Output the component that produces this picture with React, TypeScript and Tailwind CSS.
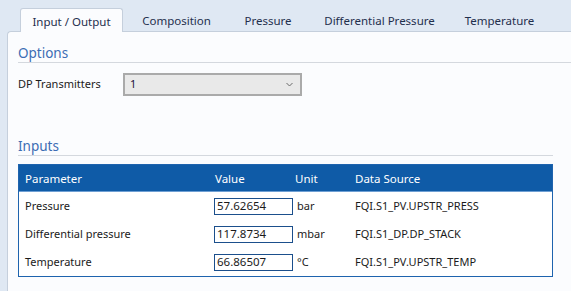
import { useState } from "react";

const tabs = [
  { label: "Input / Output", w: "w-[103px]" },
  { label: "Composition", w: "w-[107px]" },
  { label: "Pressure", w: "w-[76px]" },
  { label: "Differential Pressure", w: "w-[147px]" },
  { label: "Temperature", w: "w-[93px]" },
];

const rows = [
  { name: "Pressure", value: "57.62654", unit: "bar", source: "FQI.S1_PV.UPSTR_PRESS" },
  { name: "Differential pressure", value: "117.8734", unit: "mbar", source: "FQI.S1_DP.DP_STACK" },
  { name: "Temperature", value: "66.86507", unit: "°C", source: "FQI.S1_PV.UPSTR_TEMP" },
];

const font = '"Noto Sans", "Open Sans", sans-serif';

function SectionTitle({ children, full }: { children: string; full?: boolean }) {
  return (
    <div
      className={
        "h-[20px] leading-[20px] text-[13.5px] text-[#3c6db4] border-b border-[#d4d8de] " +
        (full ? "" : "mr-[18px]")
      }
    >
      {children}
    </div>
  );
}

export default function App() {
  const [active, setActive] = useState(0);

  return (
    <div
      className="w-[571px] h-[291px] overflow-hidden bg-[#dfe8f3] text-[11px] text-[#1b1b1b]"
      style={{ fontFamily: font }}
    >
      {/* tab strip */}
      <div className="h-[31px] flex items-end pl-[20px]">
        {tabs.map((t, i) => (
          <div
            key={t.label}
            onClick={() => setActive(i)}
            className={
              "h-[23px] pt-[2px] flex items-center justify-center text-[11.5px] text-[#1f2f4d] cursor-default " +
              t.w +
              (i === active
                ? " relative z-10 -mb-px h-[24px] bg-[#fbfcfe] border border-b-0 border-[#c5cfdc] rounded-t-[3px]"
                : "")
            }
          >
            {t.label}
          </div>
        ))}
      </div>

      {/* panel */}
      <div className="ml-[7px] h-[260px] bg-[#fbfcfe] border-l border-t border-[#c5cfdc] rounded-tl-[4px] pl-[10px] pt-[11px]">
        <SectionTitle full>Options</SectionTitle>

        <div className="mt-[10px] flex items-center h-[23px]">
          <span className="w-[105px]">DP Transmitters</span>
          <div className="w-[179px] h-[23px] border-2 border-[#aaaaaa] bg-[#e9e9e9] flex items-center justify-between pl-[5px] pr-[7px]">
            <span className="text-[#22103a]">1</span>
            <svg width="7" height="5" viewBox="0 0 7 5">
              <path d="M0.5 1 L3.5 4 L6.5 1" fill="none" stroke="#6b6b6b" strokeWidth="1" />
            </svg>
          </div>
        </div>

        <div className="mt-[40px]">
          <SectionTitle>Inputs</SectionTitle>
        </div>

        <div className="mt-[8px] w-[535px] border border-[#1e63ae] bg-white">
          <div className="h-[27px] pt-[2px] grid grid-cols-[195px_81px_60px_1fr] items-center bg-[#0f5ba7] text-white text-[11.5px] border-b border-[#6e9fd3]">
            <span className="pl-[6px]">Parameter</span>
            <span className="pl-[1px]">Value</span>
            <span>Unit</span>
            <span>Data Source</span>
          </div>
          {rows.map((r) => (
            <div key={r.name} className="h-[28px] grid grid-cols-[195px_81px_60px_1fr] items-center">
              <span className="pl-[6px]">{r.name}</span>
              <input
                readOnly
                value={r.value}
                className="w-[79px] h-[17px] border border-[#1b4f8c] bg-white pl-[2px] text-[11.5px] text-[#1b1b1b] outline-none"
                style={{ fontFamily: font }}
              />
              <span className="pl-[2px]">{r.unit}</span>
              <span>{r.source}</span>
            </div>
          ))}
        </div>
      </div>
    </div>
  );
}
